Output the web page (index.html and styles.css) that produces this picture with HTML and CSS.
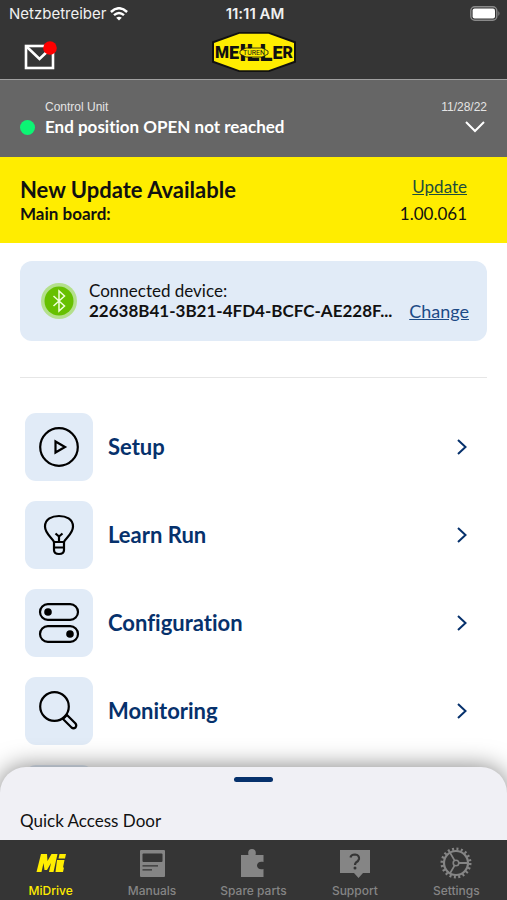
FILE: index.html
```
<!DOCTYPE html>
<html lang="en">
<head>
  <meta charset="utf-8" />
  <title>MiDrive</title>
  <meta name="viewport" content="width=device-width,initial-scale=1.0" />
  <link rel="stylesheet" href="styles.css">
</head>
<body>
<div class="app">
  <header class="header">
    <div class="statusBar">
      <div class="carrier">
        <span>Netzbetreiber</span>
        <svg width="18" height="14" viewBox="0 0 18 14" fill="none" stroke="#fff" stroke-width="2.4">
          <path d="M0.9 5 Q9 -2.6 17.1 5" />
          <path d="M4 8.2 Q9 3.6 14 8.2" />
          <path d="M9 13.6 L6.2 10.7 Q9 8.6 11.8 10.7 Z" fill="#fff" stroke="none" />
        </svg>
      </div>
      <div class="clock">11:11 AM</div>
      <div class="battery">
        <svg width="31" height="15" viewBox="0 0 31 15">
          <rect x="0.8" y="0.8" width="26" height="13.4" rx="4" fill="none" stroke="#8a8a8a" stroke-width="1.4" />
          <rect x="2.6" y="2.6" width="22.4" height="9.8" rx="2" fill="#fff" />
          <path d="M28.4 5 Q30.6 7.5 28.4 10 Z" fill="#8a8a8a" />
        </svg>
      </div>
    </div>
    <div class="brandBar">
      <button class="mailBtn" aria-label="Messages">
        <svg width="34" height="30" viewBox="0 0 34 30">
          <rect x="2" y="5" width="27" height="22" fill="none" stroke="#fff" stroke-width="2.6" />
          <path d="M3 6 L15.500 18 L28 6" fill="none" stroke="#fff" stroke-width="2.6" />
          <circle cx="26" cy="7" r="6.800" fill="#f00" />
        </svg>
      </button>
      <svg class="logo" width="86" height="42" viewBox="0 0 86 42">
        <path d="M1 10.500 L28 1 H58 L85 10.500 V31.500 L58 41 H28 L1 31.500 Z" fill="#111" />
        <path d="M3 12 L28.500 2.800 H57.500 L83 12 V30 L57.500 39.200 H28.500 L3 30 Z" fill="#ffed00" />
        <text class="logoText" x="43" y="27" text-anchor="middle">M<tspan class="logoMid" dy="1">E</tspan><tspan class="logoTall" dy="2">ILL</tspan><tspan class="logoMid" dy="-2">E</tspan><tspan dy="-1">R</tspan></text>
        <path d="M29 20 L35 17 H51 L57 20 V23 L51 26 H35 L29 23 Z" fill="#ffed00" stroke="#111" stroke-width="0.8" />
        <text class="logoSub" x="43" y="24" text-anchor="middle">TÜREN</text>
      </svg>
    </div>
  </header>

  <section class="alert">
    <div class="alertMeta">
      <span>Control Unit</span>
      <span>11/28/22</span>
    </div>
    <div class="alertLine">
      <span class="dot"></span>
      <span class="alertText">End position OPEN not reached</span>
      <button class="expandBtn" aria-label="Show details">
        <svg width="20" height="12" viewBox="0 0 20 12" fill="none" stroke="#fff" stroke-width="2">
          <path d="M1 1 L10 10 L19 1" />
        </svg>
      </button>
    </div>
  </section>

  <section class="update">
    <div class="updateRow">
      <h1>New Update Available</h1>
      <a href="#update">Update</a>
    </div>
    <div class="updateRow">
      <strong>Main board:</strong>
      <span>1.00.061</span>
    </div>
  </section>

  <main class="content">
    <section class="device">
      <svg class="bluetooth" width="38" height="38" viewBox="0 0 38 38">
        <circle cx="19" cy="19" r="18" fill="#b4e08c" />
        <circle cx="19" cy="19" r="14.500" fill="#66c000" />
        <path d="M13.500 14 L24.500 24 L19 29 V9 L24.500 14 L13.500 24" fill="none" stroke="#efffd8" stroke-width="1.500" />
      </svg>
      <div class="deviceText">
        <div>Connected device:</div>
        <div class="deviceId">22638B41-3B21-4FD4-BCFC-AE228F...</div>
      </div>
      <a href="#change">Change</a>
    </section>

    <nav class="menu">
      <a class="menuItem" href="#setup">
        <span class="tile">
          <svg width="44" height="44" viewBox="0 0 44 44" fill="none" stroke="#000" stroke-width="2.200">
            <circle cx="22" cy="22" r="18.800" />
            <path d="M18.500 16.500 V27.500 L28 22 Z" />
          </svg>
        </span>
        <span class="menuLabel">Setup</span>
        <svg class="chevron" width="10" height="16" viewBox="0 0 10 16"><path d="M1 1 L8.500 8 L1 15" /></svg>
      </a>
      <a class="menuItem" href="#learn">
        <span class="tile">
          <svg width="44" height="44" viewBox="0 0 44 44" fill="none" stroke="#000" stroke-width="2.200">
            <path d="M17 29 C16 25.500 8 21 8 13.500 C8 6 15 3 22 3 C29 3 36 6 36 13.500 C36 21 28 25.500 27 29 Z" />
            <path d="M17 29 V37 Q17 41 22 41 Q27 41 27 37 V29 M17 34.500 H27 M22 29 V23.500 L18.500 20.500 M22 23.500 L25.500 20.500" />
          </svg>
        </span>
        <span class="menuLabel">Learn Run</span>
        <svg class="chevron" width="10" height="16" viewBox="0 0 10 16"><path d="M1 1 L8.500 8 L1 15" /></svg>
      </a>
      <a class="menuItem" href="#configuration">
        <span class="tile">
          <svg width="44" height="44" viewBox="0 0 44 44" fill="none" stroke="#000" stroke-width="2.200">
            <rect x="3" y="3.200" width="38" height="15.600" rx="7.800" />
            <rect x="3" y="25.200" width="38" height="15.600" rx="7.800" />
            <circle cx="11" cy="11" r="3.800" fill="#000" stroke="none" />
            <circle cx="33" cy="33" r="3.800" fill="#000" stroke="none" />
          </svg>
        </span>
        <span class="menuLabel">Configuration</span>
        <svg class="chevron" width="10" height="16" viewBox="0 0 10 16"><path d="M1 1 L8.500 8 L1 15" /></svg>
      </a>
      <a class="menuItem" href="#monitoring">
        <span class="tile">
          <svg width="44" height="44" viewBox="0 0 44 44" fill="none" stroke="#000" stroke-width="2.200">
            <circle cx="17.500" cy="17.500" r="14.300" />
            <path d="M26 30 L34.500 38.500 Q36.500 40 38.500 38.500 Q40 36.500 38.500 34.500 L30 26 Z" />
          </svg>
        </span>
        <span class="menuLabel">Monitoring</span>
        <svg class="chevron" width="10" height="16" viewBox="0 0 10 16"><path d="M1 1 L8.500 8 L1 15" /></svg>
      </a>
      <div class="menuItem"><span class="tile"></span></div>
    </nav>
  </main>

  <section class="sheet">
    <button class="handle" aria-label="Open quick access"></button>
    <h2>Quick Access Door</h2>
  </section>

  <nav class="tabs">
    <a class="tab active" href="#midrive">
      <svg width="32" height="32" viewBox="0 0 32 32" fill="#ffed00">
        <path d="M6 7 H12 L12.500 14 L16.500 7 H22.500 L18.500 25 H14 L16 16 L12 23 H9.500 L8.500 16 L6.500 25 H1.500 Z" />
        <path d="M24.500 7 H31 L30 11.500 H23.500 Z M22 13 H29.500 L28 20.500 H29 L28 25 H20.500 Z" />
      </svg>
      <span>MiDrive</span>
    </a>
    <a class="tab" href="#manuals">
      <svg width="32" height="32" viewBox="0 0 32 32">
        <rect x="4" y="3" width="25" height="27" rx="1" fill="#858585" />
        <rect x="6.500" y="6.500" width="20" height="8.500" rx="1" fill="#353535" />
        <path d="M6.500 18.800 H22 M6.500 22.800 H16" stroke="#353535" stroke-width="1.200" />
      </svg>
      <span>Manuals</span>
    </a>
    <a class="tab" href="#parts">
      <svg width="32" height="32" viewBox="0 0 32 32" fill="#858585">
        <path d="M4 8 H11.500 C10.500 4.500 12 2 15 2 C18 2 19.500 4.500 18.500 8 H26.500 V15 C23 14 20 15.500 20 18.500 C20 21.500 23 23 26.500 22 V30 H4 Z" />
      </svg>
      <span>Spare parts</span>
    </a>
    <a class="tab" href="#support">
      <svg width="32" height="32" viewBox="0 0 32 32">
        <path d="M1 3 H31 V26 H24 L19.500 31 L15 26 H1 Z" fill="#858585" />
        <path d="M11.500 10.500 Q12 7.500 16 7.500 Q20.500 8 20 12 Q19.500 14 17 15.500 Q16 16.500 16 18" fill="none" stroke="#353535" stroke-width="2.200" />
        <circle cx="16" cy="21" r="1.500" fill="#353535" />
      </svg>
      <span>Support</span>
    </a>
    <a class="tab" href="#settings">
      <svg width="32" height="32" viewBox="0 0 32 32" fill="none" stroke="#858585">
        <circle cx="16" cy="16" r="14" stroke-width="3" stroke-dasharray="2 2.400" />
        <circle cx="16" cy="16" r="12" stroke-width="2.200" />
        <circle cx="16" cy="16" r="2.800" stroke-width="1.600" />
        <path d="M19 16 H28 M14.500 13.400 L10 5.600 M14.500 18.600 L10 26.400" stroke-width="1.800" />
      </svg>
      <span>Settings</span>
    </a>
  </nav>
</div>
</body>
</html>
```
FILE: styles.css
```
* {
  box-sizing: border-box;
}

body {
  margin: 0;
  font-family: Lato, "Liberation Sans", sans-serif;
  font-size: 17px;
  line-height: 20px;
  font-variant-ligatures: none;
  color: #111;
  background: #fff;
}

h1, h2 {
  margin: 0;
}

svg {
  display: block;
  flex: none;
}

button {
  display: block;
  padding: 0;
  border: 0;
  background: none;
}

.app {
  display: flex;
  flex-direction: column;
  height: 100vh;
}

.header {
  flex: none;
  background: #353535;
  border-bottom: 1px solid #a0a0a0;
}

.statusBar {
  display: grid;
  grid-template-columns: 1fr auto 1fr;
  align-items: center;
  height: 27px;
  padding: 0 6px 0 9px;
  font-family: Inter, sans-serif;
  font-size: 15px;
  color: #f0f0f0;
}

.carrier {
  display: flex;
  align-items: center;
  gap: 4px;
}

.clock {
  font-weight: 600;
}

.battery {
  justify-self: end;
}

.brandBar {
  display: grid;
  grid-template-columns: 1fr auto 1fr;
  height: 52px;
  padding: 4px 24px 0;
}

.mailBtn {
  justify-self: start;
  align-self: start;
  padding-top: 10px;
}

.logoText {
  font-family: Roboto, sans-serif;
  font-size: 16px;
  font-weight: 900;
  fill: #111;
}

.logoMid {
  font-size: 18px;
}

.logoTall {
  font-size: 24px;
}

.logoSub {
  font-family: Roboto, sans-serif;
  font-size: 7px;
  fill: #111;
}

.alert {
  flex: none;
  height: 77px;
  padding: 17px 20px 0;
  background: #666;
  color: #fff;
}

.alertMeta {
  display: flex;
  justify-content: space-between;
  padding-left: 25px;
  font: 12px/20px "Liberation Sans", sans-serif;
  color: #e4e4e4;
}

.alertLine {
  display: flex;
  align-items: center;
  gap: 10px;
}

.dot {
  width: 15px;
  height: 15px;
  border-radius: 50%;
  background: #0cf574;
}

.alertText {
  flex: 1;
  font-weight: bold;
}

.expandBtn {
  padding: 0 2px;
}

.update {
  flex: none;
  height: 86px;
  padding: 20px 40px 0 20px;
  background: #ffed00;
}

.updateRow {
  display: flex;
  justify-content: space-between;
  line-height: 22px;
}

.updateRow h1 {
  font-size: 22px;
  line-height: 26px;
}

.updateRow a {
  color: #1d4d3c;
  line-height: 20px;
}

.content {
  flex: 1;
  min-height: 0;
  overflow: hidden;
  padding: 18px 20px 0;
}

.device {
  display: flex;
  align-items: center;
  height: 80px;
  padding: 0 18px 0 20px;
  border-radius: 12px;
  background: #e1ebf7;
}

.deviceText {
  flex: 1;
  min-width: 0;
  padding: 0 10px 0 11px;
}

.deviceId {
  overflow: hidden;
  text-overflow: ellipsis;
  white-space: nowrap;
  font-weight: bold;
}

.device a {
  align-self: flex-end;
  padding-bottom: 20px;
  font-size: 18px;
  color: #1d4a86;
}

.menu {
  display: flex;
  flex-direction: column;
  gap: 20px;
  margin-top: 36px;
  padding: 35px 20px 0 5px;
  border-top: 1px solid #e6e6e6;
}

.menuItem {
  display: flex;
  align-items: center;
  gap: 15px;
  color: #06316c;
  text-decoration: none;
}

.tile {
  display: flex;
  align-items: center;
  justify-content: center;
  width: 68px;
  height: 68px;
  border-radius: 11px;
  background: #e1ebf7;
}

.menuLabel {
  flex: 1;
  font-size: 22px;
  font-weight: bold;
  line-height: 28px;
}

.chevron {
  fill: none;
  stroke: #06316c;
  stroke-width: 2;
}

.sheet {
  position: relative;
  flex: none;
  height: 73px;
  margin-top: -24px;
  padding: 10px 20px 0;
  border-radius: 26px 26px 0 0;
  background: #f0f0f5;
  box-shadow: 0 0 24px rgba(0,0,0,0.5);
}

.handle {
  width: 39px;
  height: 5px;
  margin: 0 auto;
  border-radius: 3px;
  background: #06316c;
}

.sheet h2 {
  margin-top: 29px;
  font-size: 17px;
  font-weight: normal;
  line-height: 20px;
}

.tabs {
  position: relative;
  display: grid;
  grid-template-columns: repeat(5, 1fr);
  flex: none;
  height: 60px;
  padding-top: 7px;
  background: #353535;
}

.tab {
  display: flex;
  flex-direction: column;
  align-items: center;
  gap: 4px;
  font-family: Inter, sans-serif;
  font-size: 12px;
  font-weight: 500;
  line-height: 16px;
  color: #858585;
  text-decoration: none;
}

.tab.active {
  color: #ffed00;
}
```
